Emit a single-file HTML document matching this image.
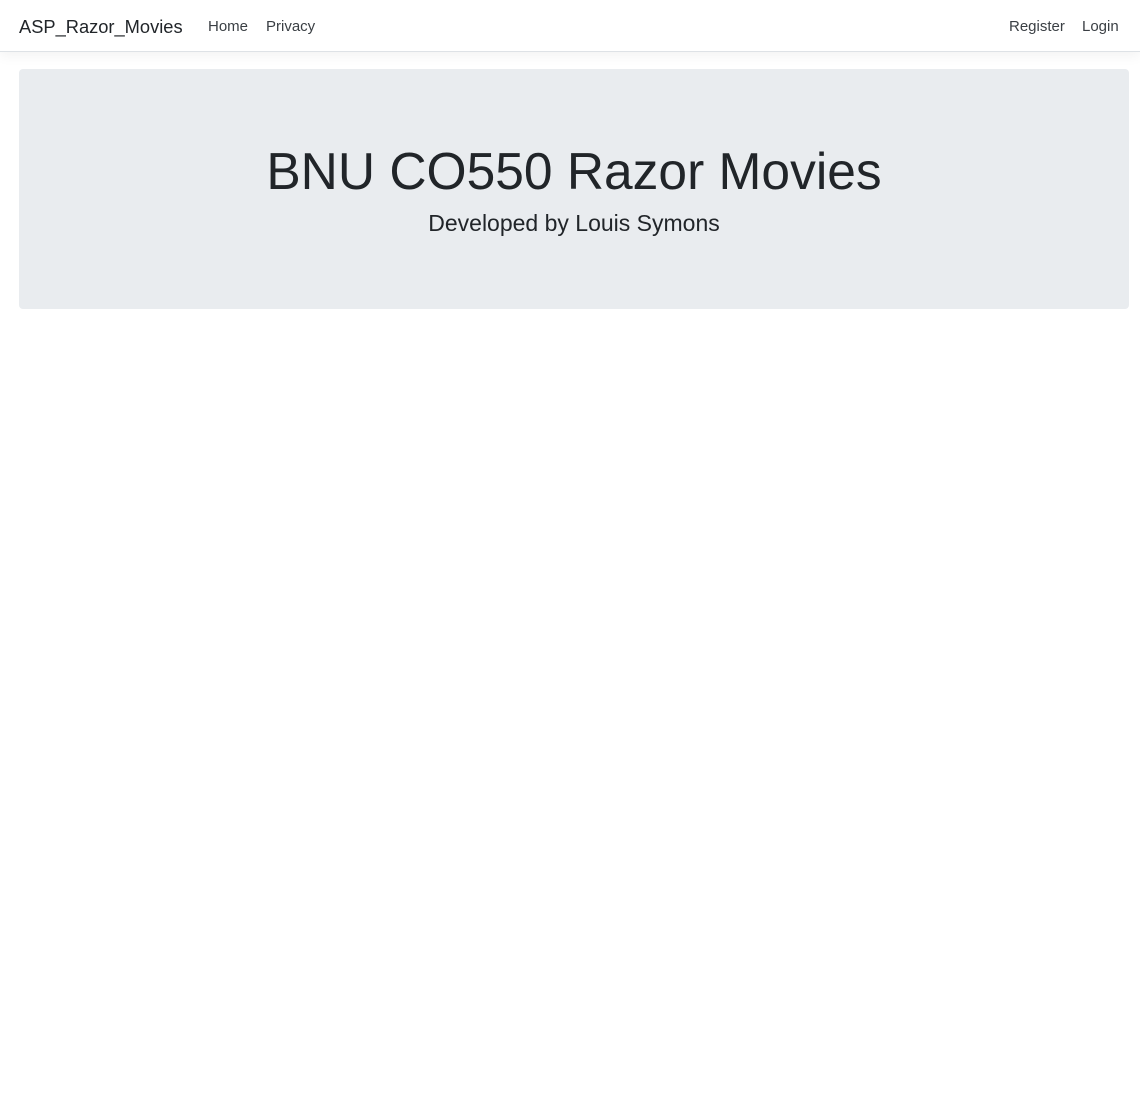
<!DOCTYPE html>
<html><head><meta charset="utf-8"><style>
body{margin:0;background:#fff;font-family:"Liberation Sans",sans-serif;color:#212529;}
.nav{height:51px;border-bottom:1px solid #dee2e6;box-shadow:0 .25rem .75rem rgba(0,0,0,.05);position:relative;}
.brand{position:absolute;left:19px;top:16px;font-size:18.3px;color:#212529;}
.l{position:absolute;top:18px;font-size:15px;color:#3a3f44;}
.jumbo{position:absolute;left:19px;top:69px;width:1110px;height:240px;background:#e9ecef;border-radius:4px;text-align:center;}
h1{margin:0;position:absolute;top:72px;width:100%;font-size:51.5px;font-weight:300;line-height:60px;}
p{margin:0;position:absolute;top:141px;width:100%;font-size:23px;}
</style></head><body>
<div class="nav"><span class="brand">ASP_Razor_Movies</span>
<span class="l" style="left:208px">Home</span><span class="l" style="left:266px">Privacy</span>
<span class="l" style="left:1009px">Register</span><span class="l" style="left:1082px">Login</span></div>
<div class="jumbo"><h1>BNU CO550 Razor Movies</h1><p>Developed by Louis Symons</p></div>
</body></html>
